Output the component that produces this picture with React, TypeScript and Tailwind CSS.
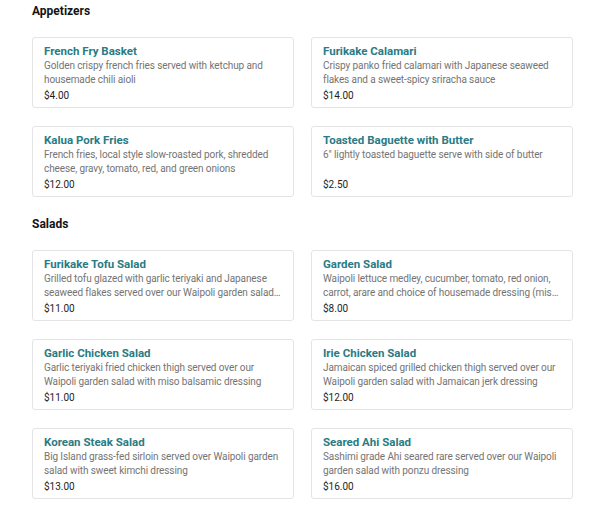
type Item = { name: string; description: string; price: string };

const appetizers: Item[] = [
  {
    name: 'French Fry Basket',
    description: 'Golden crispy french fries served with ketchup and housemade chili aioli',
    price: '$4.00',
  },
  {
    name: 'Furikake Calamari',
    description: 'Crispy panko fried calamari with Japanese seaweed flakes and a sweet-spicy sriracha sauce',
    price: '$14.00',
  },
  {
    name: 'Kalua Pork Fries',
    description: 'French fries, local style slow-roasted pork, shredded cheese, gravy, tomato, red, and green onions',
    price: '$12.00',
  },
  {
    name: 'Toasted Baguette with Butter',
    description: '6" lightly toasted baguette serve with side of butter',
    price: '$2.50',
  },
];

const salads: Item[] = [
  {
    name: 'Furikake Tofu Salad',
    description:
      'Grilled tofu glazed with garlic teriyaki and Japanese seaweed flakes served over our Waipoli garden salad with miso balsamic dressing',
    price: '$11.00',
  },
  {
    name: 'Garden Salad',
    description:
      'Waipoli lettuce medley, cucumber, tomato, red onion, carrot, arare and choice of housemade dressing (miso balsamic, ranch or ponzu)',
    price: '$8.00',
  },
  {
    name: 'Garlic Chicken Salad',
    description: 'Garlic teriyaki fried chicken thigh served over our Waipoli garden salad with miso balsamic dressing',
    price: '$11.00',
  },
  {
    name: 'Irie Chicken Salad',
    description: 'Jamaican spiced grilled chicken thigh served over our Waipoli garden salad with Jamaican jerk dressing',
    price: '$12.00',
  },
  {
    name: 'Korean Steak Salad',
    description: 'Big Island grass-fed sirloin served over Waipoli garden salad with sweet kimchi dressing',
    price: '$13.00',
  },
  {
    name: 'Seared Ahi Salad',
    description: 'Sashimi grade Ahi seared rare served over our Waipoli garden salad with ponzu dressing',
    price: '$16.00',
  },
];

const MenuCard = ({ item }: { item: Item }) => (
  <div className="h-[71px] rounded-[3px] border border-[#e4e4e4] bg-white px-[11px] pt-[6px] pb-[4px]">
    <div className="truncate text-[11.5px] leading-[15px] font-bold text-[#2a7b85]">{item.name}</div>
    <p className="line-clamp-2 h-[28px] text-[10px] leading-[14px] tracking-[-0.1px] text-[#747474]">
      {item.description}
    </p>
    <div className="mt-[2px] text-[10px] leading-[14px] text-[#1e1e1e]">{item.price}</div>
  </div>
);

const Section = ({ title, items, first }: { title: string; items: Item[]; first?: boolean }) => (
  <section className={first ? '' : 'mt-[16px]'}>
    <h2 className="mb-[15px] text-[12px] leading-[22px] font-bold text-[#141414]">{title}</h2>
    <div className="grid grid-cols-[262px_262px] gap-x-[17px] gap-y-[18px]">
      {items.map((item) => (
        <MenuCard key={item.name} item={item} />
      ))}
    </div>
  </section>
);

export default function App() {
  return (
    <div className="h-[515px] w-[600px] overflow-hidden bg-white pl-[32px] font-['Roboto',sans-serif] antialiased">
      <Section title="Appetizers" items={appetizers} first />
      <Section title="Salads" items={salads} />
    </div>
  );
}
